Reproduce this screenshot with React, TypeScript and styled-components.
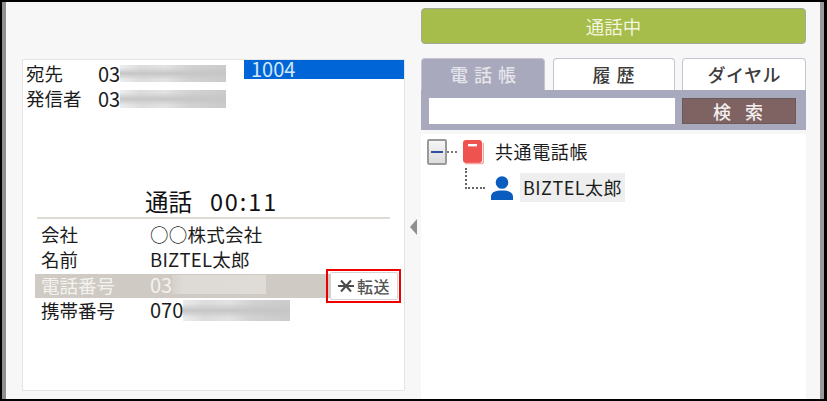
import React from 'react'
import styled, { createGlobalStyle } from 'styled-components'

const GlobalStyle = createGlobalStyle`
  html, body {
    margin: 0;
    padding: 0;
    background: #fff;
  }
  body {
    font-family: "Noto Sans CJK JP", "Noto Sans", sans-serif;
    line-height: 1.2;
    color: #1c1c1c;
  }
`

const Frame = styled.div`
  box-sizing: border-box;
  width: 827px;
  height: 401px;
  padding: 2px 3px 2px 2px;
  background: #000;
  overflow: hidden;
`

const Window = styled.div`
  box-sizing: border-box;
  height: 100%;
  display: flex;
  padding-left: 16px;
  padding-right: 14px;
  background: #f7f7f7;
  border-left: 4px solid #8f8f8f;
  border-right: 4px solid #9a9a9a;
`

const LeftPane = styled.div`
  width: 383px;
  flex: none;
  padding-top: 57px;
`

const Card = styled.section`
  box-sizing: border-box;
  height: 332px;
  display: flex;
  flex-direction: column;
  background: #fff;
  border: 1px solid #e4e4e4;
`

const CardTop = styled.div`
  display: flex;
  justify-content: space-between;
  height: 128px;
`

const PartyList = styled.div`
  padding: 1px 0 0 3px;
`

const PartyRow = styled.div`
  display: flex;
  align-items: center;
  height: 25px;
  font-size: 18.5px;
`

const PartyLabel = styled.span`
  width: 72px;
`

const Value = styled.span<{ $light?: boolean; $digits?: boolean }>`
  font-size: ${p => (p.$digits ? '20px' : '18.5px')};
  letter-spacing: ${p => (p.$digits ? '0' : '0.25px')};
  color: ${p => (p.$light ? '#f4f2ee' : '#1c1c1c')};
`

const Blurred = styled.span<{ $w: number; $h: number; $tone: 'grey' | 'pale' }>`
  display: inline-block;
  width: ${p => p.$w}px;
  height: ${p => p.$h}px;
  background: ${p =>
    p.$tone === 'pale'
      ? 'linear-gradient(90deg, #d5d2cc 0, #dedbd6 12%, #dfdcd7 100%)'
      : 'linear-gradient(180deg, transparent 15%, #c6c6c6 50%, transparent 85%) no-repeat 0 0 / 100% 100%, linear-gradient(90deg, #ececec 0, #dcdcdc 20%, #e2e2e2 42%, #d2d2d2 65%, #cbcbcb 100%)'};
`

const Extension = styled.div`
  box-sizing: border-box;
  width: 160px;
  height: 19px;
  padding-left: 7px;
  background: #0066d8;
  color: #d5e6fa;
  font-size: 20px;
  line-height: 18px;
`

const CallTitle = styled.h2`
  margin: 0;
  height: 29px;
  display: flex;
  justify-content: center;
  gap: 18px;
  padding-right: 4px;
  font-size: 23.5px;
  font-weight: 400;
  line-height: 27px;
  color: #111;
`

const CallTime = styled.span`
  letter-spacing: 1.9px;
`

const Divider = styled.hr`
  margin: 0 14px;
  height: 2px;
  border: 0;
  background: #dedbd4;
`

const Details = styled.div`
  padding: 3px 0 0 12px;
`

const DetailRow = styled.div`
  display: flex;
  align-items: center;
  height: 25.5px;
`

const DetailField = styled.div<{ $selected?: boolean }>`
  box-sizing: border-box;
  width: 295px;
  height: 24px;
  display: flex;
  align-items: center;
  padding: 0 0 2px 6px;
  background: ${p => (p.$selected ? '#cfcbc4' : 'transparent')};
  color: ${p => (p.$selected ? '#f4f2ee' : '#1c1c1c')};
  white-space: nowrap;
`

const DetailLabel = styled.span`
  width: 109px;
  flex: none;
  font-size: 18.5px;
`

const TransferHighlight = styled.div`
  box-sizing: border-box;
  flex: none;
  width: 75px;
  height: 34px;
  margin: -5px 0 -5px -4px;
  padding: 1px 1px 1px 2px;
  border: 2px solid #ee0000;
  display: flex;
`

const TransferButton = styled.button`
  flex: 1;
  display: flex;
  align-items: center;
  justify-content: center;
  gap: 3px;
  padding: 0;
  background: #fff;
  border: 1px solid #d4d4d4;
  border-radius: 2px;
  color: #555;
  font-family: inherit;
  font-size: 16px;
  font-weight: 500;
  letter-spacing: 0.5px;
`

const Gutter = styled.div`
  width: 16px;
  flex: none;
  display: flex;
  justify-content: center;
  padding-top: 217px;
`

const CollapseArrow = styled.span`
  width: 0;
  height: 0;
  border-style: solid;
  border-width: 8px 7px 8px 0;
  border-color: transparent #8f8f8f transparent transparent;
`

const RightPane = styled.div`
  width: 385px;
  flex: none;
  display: flex;
  flex-direction: column;
  padding-top: 6px;
`

const StatusBar = styled.div`
  box-sizing: border-box;
  height: 36px;
  display: flex;
  align-items: center;
  justify-content: center;
  background: #a6bc4b;
  border: 1px solid #a3a89a;
  border-radius: 4px;
  color: #f1f5dd;
  font-size: 18.5px;
`

const Tabs = styled.div`
  display: flex;
  justify-content: space-between;
  margin-top: 14px;
`

const Tab = styled.div<{ $active?: boolean; $w: number; $spacing: number }>`
  box-sizing: border-box;
  width: ${p => p.$w}px;
  height: 32px;
  display: flex;
  align-items: center;
  justify-content: center;
  background: ${p => (p.$active ? '#a9a9bd' : '#fff')};
  border: 1px solid #c4c4d2;
  border-bottom: 0;
  border-radius: 4px 4px 0 0;
  color: ${p => (p.$active ? '#e4e4ea' : '#3c3c3c')};
  font-size: 18px;
  font-weight: 500;
  letter-spacing: ${p => p.$spacing}px;
  text-indent: ${p => p.$spacing}px;
`

const SearchBar = styled.div`
  box-sizing: border-box;
  height: 40px;
  display: flex;
  padding: 8px 10px 6px 8px;
  gap: 7px;
  background: #a9a9bd;
`

const SearchInput = styled.input`
  box-sizing: border-box;
  width: 246px;
  height: 26px;
  padding: 0;
  background: #fff;
  border: 0;
  border-radius: 0;
`

const SearchButton = styled.button`
  width: 114px;
  height: 26px;
  padding: 0 0 0 12px;
  background: #7f6363;
  border: 1px solid #6c5a5a;
  color: #f4f0f0;
  font-family: inherit;
  font-size: 18px;
  font-weight: 500;
  letter-spacing: 14px;
  line-height: 22px;
`

const TreePanel = styled.div`
  flex: 1;
  margin-top: 4px;
  padding: 5px 0 0 6px;
  background: #fff;
`

const TreeRow = styled.div<{ $child?: boolean }>`
  display: flex;
  align-items: center;
  margin-top: ${p => (p.$child ? '8px' : '0')};
`

const Expander = styled.span`
  box-sizing: border-box;
  width: 20px;
  height: 26px;
  display: flex;
  align-items: center;
  justify-content: center;
  background: linear-gradient(180deg, #f6f6f6 0%, #dcdcdc 100%);
  border: 2px solid #9a9a9a;
  border-radius: 2px;
  &::before {
    content: '';
    width: 12px;
    height: 2px;
    background: #2f4f9f;
  }
`

const DotLine = styled.span`
  width: 10px;
  margin: 0 6px 0 0;
  border-top: 2px dotted #777;
`

const Elbow = styled.span`
  box-sizing: border-box;
  width: 20px;
  height: 21px;
  margin: -5px 6px 0 38px;
  border-left: 2px dotted #666;
  border-bottom: 2px dotted #666;
  align-self: flex-start;
`

const NodeText = styled.span`
  margin-left: 11px;
  font-size: 18px;
  letter-spacing: 0.6px;
`

const SelectedText = styled.span`
  margin-left: 7px;
  height: 29px;
  padding: 0 3px;
  background: #eeeeee;
  font-size: 18px;
  letter-spacing: 0.5px;
  line-height: 29px;
`

const BookIcon = () => (
  <svg width="21" height="25" viewBox="0 0 21 25">
    <rect x="0" y="0" width="19" height="23" rx="3" fill="#ef5350" />
    <path d="M2 23.5h16.5a2 2 0 0 0 2-2V3" fill="none" stroke="#f7a5a5" strokeWidth="1.6" />
    <rect x="5" y="4" width="9" height="2.4" fill="#fff" />
  </svg>
)

const PersonIcon = () => (
  <svg width="22" height="24" viewBox="0 0 22 24">
    <circle cx="11" cy="6.5" r="6.3" fill="#0a5cbe" />
    <path d="M0 24v-3.5C0 16 5 14.5 11 14.5S22 16 22 20.5V24Z" fill="#0a5cbe" />
  </svg>
)

const TransferIcon = () => (
  <svg width="16" height="14" viewBox="0 0 16 14">
    <path d="M0 7h16M3 1.5 13 12.5M13 1.5 3 12.5" stroke="#4c4c4c" strokeWidth="2" fill="none" />
  </svg>
)

export default function App() {
  return (
    <>
      <GlobalStyle />
      <Frame>
        <Window>
          <LeftPane>
            <Card>
              <CardTop>
                <PartyList>
                  <PartyRow>
                    <PartyLabel>宛先</PartyLabel>
                    <Value $digits>03</Value>
                    <Blurred $w={106} $h={17} $tone="grey" />
                  </PartyRow>
                  <PartyRow>
                    <PartyLabel>発信者</PartyLabel>
                    <Value $digits>03</Value>
                    <Blurred $w={106} $h={18} $tone="grey" />
                  </PartyRow>
                </PartyList>
                <Extension>1004</Extension>
              </CardTop>
              <CallTitle>
                <span>通話</span>
                <CallTime>00:11</CallTime>
              </CallTitle>
              <Divider />
              <Details>
                <DetailRow>
                  <DetailField>
                    <DetailLabel>会社</DetailLabel>
                    <Value>○○株式会社</Value>
                  </DetailField>
                </DetailRow>
                <DetailRow>
                  <DetailField>
                    <DetailLabel>名前</DetailLabel>
                    <Value>BIZTEL太郎</Value>
                  </DetailField>
                </DetailRow>
                <DetailRow>
                  <DetailField $selected>
                    <DetailLabel>電話番号</DetailLabel>
                    <Value $light $digits>03</Value>
                    <Blurred $w={94} $h={19} $tone="pale" />
                  </DetailField>
                  <TransferHighlight>
                    <TransferButton>
                      <TransferIcon />
                      転送
                    </TransferButton>
                  </TransferHighlight>
                </DetailRow>
                <DetailRow>
                  <DetailField>
                    <DetailLabel>携帯番号</DetailLabel>
                    <Value $digits>070</Value>
                    <Blurred $w={107} $h={21} $tone="grey" />
                  </DetailField>
                </DetailRow>
              </Details>
            </Card>
          </LeftPane>
          <Gutter>
            <CollapseArrow />
          </Gutter>
          <RightPane>
            <StatusBar>通話中</StatusBar>
            <Tabs>
              <Tab $active $w={124} $spacing={6}>電話帳</Tab>
              <Tab $w={122} $spacing={6}>履歴</Tab>
              <Tab $w={124} $spacing={0.5}>ダイヤル</Tab>
            </Tabs>
            <SearchBar>
              <SearchInput />
              <SearchButton>検索</SearchButton>
            </SearchBar>
            <TreePanel>
              <TreeRow>
                <Expander />
                <DotLine />
                <BookIcon />
                <NodeText>共通電話帳</NodeText>
              </TreeRow>
              <TreeRow $child>
                <Elbow />
                <PersonIcon />
                <SelectedText>BIZTEL太郎</SelectedText>
              </TreeRow>
            </TreePanel>
          </RightPane>
        </Window>
      </Frame>
    </>
  )
}
